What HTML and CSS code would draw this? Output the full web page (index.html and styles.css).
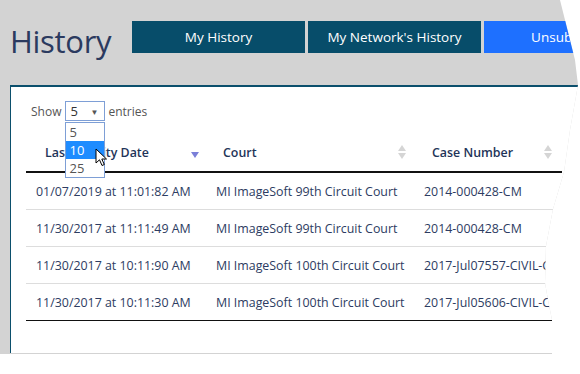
FILE: index.html
```html
<!DOCTYPE html>
<html lang="en">

<head>
    <meta charset="UTF-8">
    <meta name="viewport" content="width=device-width, initial-scale=1.0">
    <title>History</title>
    <link rel="stylesheet" href="styles.css">
</head>

<body>

    <div class="screen">
        <header class="top">
            <h1>History</h1>
            <nav class="tabs">
                <a class="tab">My History</a>
                <a class="tab">My Network's History</a>
                <a class="tab tab-alt">Unsubscribe</a>
            </nav>
        </header>

        <section class="panel">
            <div class="length">
                <span>Show</span>
                <span class="select">
                    <span class="select-value">5</span>
                    <span class="select-arrow">&#9660;</span>
                    <ul class="options">
                        <li>5</li>
                        <li class="active">10</li>
                        <li>25</li>
                    </ul>
                    <svg class="cursor" width="14" height="20" viewBox="0 0 14 20">
                        <path d="M1 1 L1 15 L4.5 11.8 L7 17.5 L9.3 16.5 L6.8 11 L11.5 11 Z" fill="#fff" stroke="#000" stroke-width="1" stroke-linejoin="round" />
                    </svg>
                </span>
                <span>entries</span>
            </div>

            <table class="grid">
                <colgroup>
                    <col class="col-date">
                    <col class="col-court">
                    <col>
                </colgroup>
                <thead>
                    <tr>
                        <th class="c-date">Last Activity Date <i class="sort sort-desc"></i></th>
                        <th class="c-court">Court <i class="sort sort-both"></i></th>
                        <th class="c-case">Case Number <i class="sort sort-both"></i></th>
                    </tr>
                </thead>
                <tbody>
                    <tr>
                        <td>01/07/2019 at 11:01:82 AM</td>
                        <td>MI ImageSoft 99th Circuit Court</td>
                        <td>2014-000428-CM</td>
                    </tr>
                    <tr>
                        <td>11/30/2017 at 11:11:49 AM</td>
                        <td>MI ImageSoft 99th Circuit Court</td>
                        <td>2014-000428-CM</td>
                    </tr>
                    <tr>
                        <td>11/30/2017 at 10:11:90 AM</td>
                        <td>MI ImageSoft 100th Circuit Court</td>
                        <td>2017-Jul07557-CIVIL-CV</td>
                    </tr>
                    <tr>
                        <td>11/30/2017 at 10:11:30 AM</td>
                        <td>MI ImageSoft 100th Circuit Court</td>
                        <td>2017-Jul05606-CIVIL-CV</td>
                    </tr>
                </tbody>
            </table>
        </section>
    </div>

</body>

</html>
```

FILE: styles.css
```css
body {
    margin: 0;
    background-color: #fff;
    font-family: "Open Sans", Arial, sans-serif;
    color: #2d3c62;
}

.screen {
    width: 580px;
    height: 354px;
    background-color: #d3d3d3;
    display: flex;
    flex-direction: column;
    overflow: hidden;
    clip-path: polygon(0 0, 560px 0, 567px 28px, 575px 60px, 578px 85px, 570px 130px, 564px 172px, 553px 209px, 546px 246px, 545px 283px, 548px 300px, 552px 320px, 552px 354px, 0 354px);
}

.top {
    height: 85px;
    display: flex;
    align-items: flex-start;
    padding-left: 10px;
    box-sizing: border-box;
}

h1 {
    flex: none;
    margin: 20px 0 0;
    font-size: 31px;
    font-weight: normal;
    color: #2b3a5f;
    width: 122px;
    letter-spacing: -0.3px;
}

.tabs {
    flex: none;
    display: flex;
    gap: 3px;
    margin-top: 21px;
}

.tab {
    width: 173px;
    height: 32px;
    line-height: 32px;
    text-align: center;
    background-color: #074d6a;
    color: #fff;
    font-size: 13.5px;
    white-space: nowrap;
}

.tab-alt {
    background-color: #1e70ff;
}

.panel {
    flex: 1;
    margin: 0 0 1px 10px;
    background-color: #fff;
    border-top: 2px solid #0b4f6c;
    border-left: 1px solid #0b4f6c;
    padding: 13px 0 0 15px;
}

.length {
    display: flex;
    align-items: center;
    gap: 3px;
    font-size: 12px;
    color: #555;
    height: 22px;
    margin-left: 5px;
}

.select {
    position: relative;
    height: 20px;
    width: 40px;
    margin-left: 1px;
    border: 1px solid #7e9fd6;
    display: flex;
    align-items: center;
    justify-content: space-between;
    padding: 0 6px 0 4px;
    box-sizing: border-box;
    color: #333;
}

.select-value {
    font-size: 13px;
}

.select-arrow {
    font-size: 8px;
    color: #555;
}

.options {
    position: absolute;
    top: 20px;
    left: -1px;
    width: 40px;
    margin: 0;
    padding: 0;
    list-style: none;
    background-color: #fff;
    border: 1px solid #7e9fd6;
    box-sizing: border-box;
    z-index: 2;
}

.options li {
    height: 18px;
    line-height: 18px;
    padding-left: 3px;
    font-size: 13px;
    color: #555;
}

.options li.active {
    background-color: #1e8cff;
    color: #fff;
}

.cursor {
    position: absolute;
    top: 46px;
    left: 29px;
    z-index: 3;
}

.grid {
    border-collapse: collapse;
    width: 536px;
    margin-top: 11px;
    font-size: 12.4px;
    table-layout: fixed;
}

.col-date {
    width: 183px;
}

.col-court {
    width: 207px;
}

.grid th {
    height: 38px;
    text-align: left;
    font-weight: 600;
    color: #1f3559;
    border-bottom: 2px solid #111;
    position: relative;
    white-space: nowrap;
    padding: 0;
}

.grid td {
    height: 36px;
    border-bottom: 1px solid #ddd;
    white-space: nowrap;
    overflow: hidden;
    padding: 0 0 0 8px;
}

.grid tbody tr:last-child td {
    border-bottom: 1.5px solid #111;
}

.grid th.c-date {
    padding-left: 19px;
}

.grid th.c-court {
    padding-left: 14px;
}

.grid th.c-case {
    padding-left: 16px;
}

.grid td:nth-child(1) {
    padding-left: 10px;
}

.grid td:nth-child(2) {
    padding-left: 7px;
}

.sort {
    position: absolute;
    right: 10px;
    top: 12px;
    width: 8px;
    height: 14px;
}

.sort-desc::after {
    content: "";
    position: absolute;
    top: 7px;
    left: 0;
    border-left: 4px solid transparent;
    border-right: 4px solid transparent;
    border-top: 6px solid #7b7fd8;
}

.sort-both::before,
.sort-both::after {
    content: "";
    position: absolute;
    left: 0;
    border-left: 4px solid transparent;
    border-right: 4px solid transparent;
}

.sort-both::before {
    top: 0;
    border-bottom: 6px solid #d5d5d5;
}

.sort-both::after {
    top: 8px;
    border-top: 6px solid #d5d5d5;
}
```
